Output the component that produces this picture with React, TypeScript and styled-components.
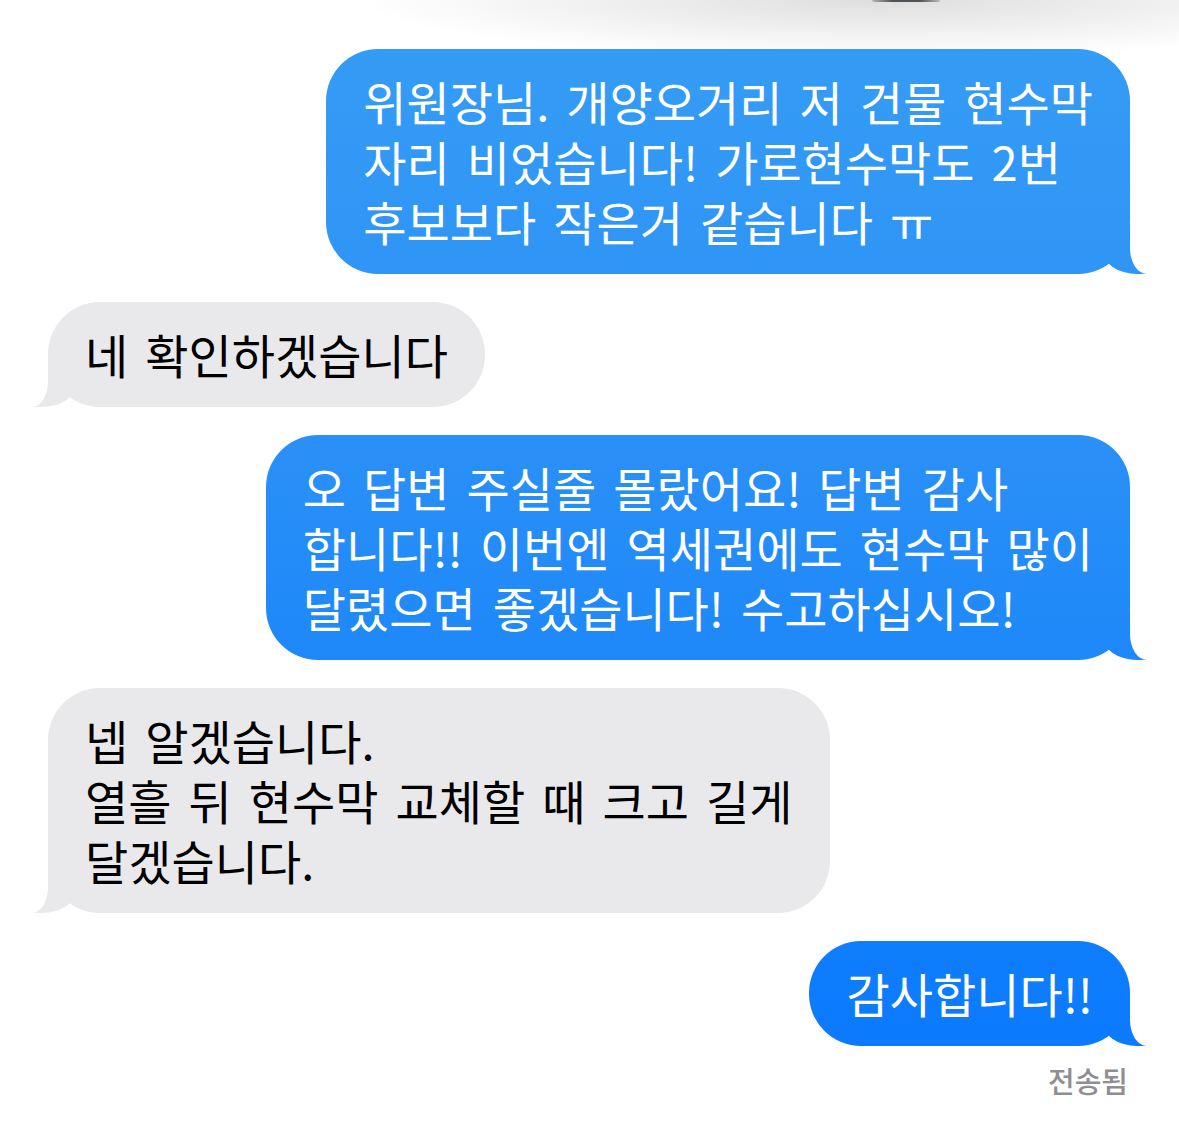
import React from "react";
import styled, { createGlobalStyle, css } from "styled-components";

const GlobalStyle = createGlobalStyle`
  html, body {
    margin: 0;
    padding: 0;
    background: #ffffff;
  }
  body {
    font-family: "Noto Sans CJK KR", "Noto Sans", sans-serif;
    -webkit-font-smoothing: antialiased;
  }
`;

/* Sent bubbles share one screen-anchored gradient, so each bubble's tint depends on where it sits. */
const sentFill = css`
  background: linear-gradient(180deg, #369df5 0px, #2a90f7 450px, #1583fb 800px, #0877ff 1127px) fixed;
`;

const receivedFill = css`
  background: #e9e9eb;
`;

const Screen = styled.div`
  position: relative;
  width: 1179px;
  min-height: 1127px;
  box-sizing: border-box;
  padding-top: 49px;
  overflow: hidden;
  background: #ffffff;
`;

const TopShade = styled.div`
  position: absolute;
  top: 0;
  left: 0;
  right: 0;
  height: 60px;
  pointer-events: none;
  background: radial-gradient(ellipse 520px 58px at 880px 0px, rgba(0, 0, 0, 0.13), rgba(0, 0, 0, 0.05) 60%, rgba(0, 0, 0, 0) 100%);
`;

const TopEdge = styled.div`
  position: absolute;
  top: 0;
  left: 872px;
  width: 68px;
  height: 2px;
  border-radius: 0 0 40px 40px;
  background: linear-gradient(90deg, rgba(120, 120, 120, 0.4), #4d5357 30%, #4d5357 70%, rgba(120, 120, 120, 0.4));
`;

const Thread = styled.div`
  display: flex;
  flex-direction: column;
  gap: 28px;
`;

const Bubble = styled.div<{ $mine?: boolean }>`
  position: relative;
  box-sizing: border-box;
  padding: 22px 37px 23px;
  border-radius: 52px;
  font-size: 47px;
  line-height: 60px;
  font-weight: 400;
  word-spacing: 6.5px;
  white-space: nowrap;
  color: ${(p) => (p.$mine ? "#ffffff" : "#000000")};
  align-self: ${(p) => (p.$mine ? "flex-end" : "flex-start")};
  margin: ${(p) => (p.$mine ? "0 49px 0 0" : "0 0 0 48px")};
  ${(p) => (p.$mine ? sentFill : receivedFill)}

  /* tail body */
  &::before {
    content: "";
    position: absolute;
    bottom: 0;
    width: 45px;
    height: 50px;
    background: inherit;
    ${(p) =>
      p.$mine
        ? css`
            right: -17px;
            border-bottom-left-radius: 35px 25px;
          `
        : css`
            left: -16px;
            border-bottom-right-radius: 35px 25px;
          `}
  }

  /* carves the concave outer curve of the tail */
  &::after {
    content: "";
    position: absolute;
    bottom: 0;
    width: 30px;
    height: 52px;
    background: #ffffff;
    ${(p) =>
      p.$mine
        ? css`
            right: -30px;
            border-bottom-left-radius: 17px 26px;
          `
        : css`
            left: -30px;
            border-bottom-right-radius: 16px 26px;
          `}
  }
`;

const Line = styled.span`
  display: block;
`;

const SentGroup = styled.div`
  display: flex;
  flex-direction: column;
  align-items: flex-end;
  gap: 16px;
`;

const Status = styled.div`
  margin-right: 51px;
  font-size: 29px;
  line-height: 36px;
  font-weight: 500;
  color: #8e8e93;
`;

type Message = { mine: boolean; lines: string[] };

const messages: Message[] = [
  {
    mine: true,
    lines: [
      "위원장님. 개양오거리 저 건물 현수막",
      "자리 비었습니다! 가로현수막도 2번",
      "후보보다 작은거 같습니다 ㅠ",
    ],
  },
  { mine: false, lines: ["네 확인하겠습니다"] },
  {
    mine: true,
    lines: [
      "오 답변 주실줄 몰랐어요! 답변 감사",
      "합니다!! 이번엔 역세권에도 현수막 많이",
      "달렸으면 좋겠습니다! 수고하십시오!",
    ],
  },
  {
    mine: false,
    lines: ["넵 알겠습니다.", "열흘 뒤 현수막 교체할 때 크고 길게", "달겠습니다."],
  },
];

const MessageBubble = ({ m }: { m: Message }) => (
  <Bubble $mine={m.mine}>
    {m.lines.map((l, i) => (
      <Line key={i}>{l}</Line>
    ))}
  </Bubble>
);

export default function App() {
  return (
    <>
      <GlobalStyle />
      <Screen>
        <TopShade />
        <TopEdge />
        <Thread>
          {messages.map((m, i) => (
            <MessageBubble key={i} m={m} />
          ))}
          <SentGroup>
            <Bubble $mine>
              <Line>감사합니다!!</Line>
            </Bubble>
            <Status>전송됨</Status>
          </SentGroup>
        </Thread>
      </Screen>
    </>
  );
}
